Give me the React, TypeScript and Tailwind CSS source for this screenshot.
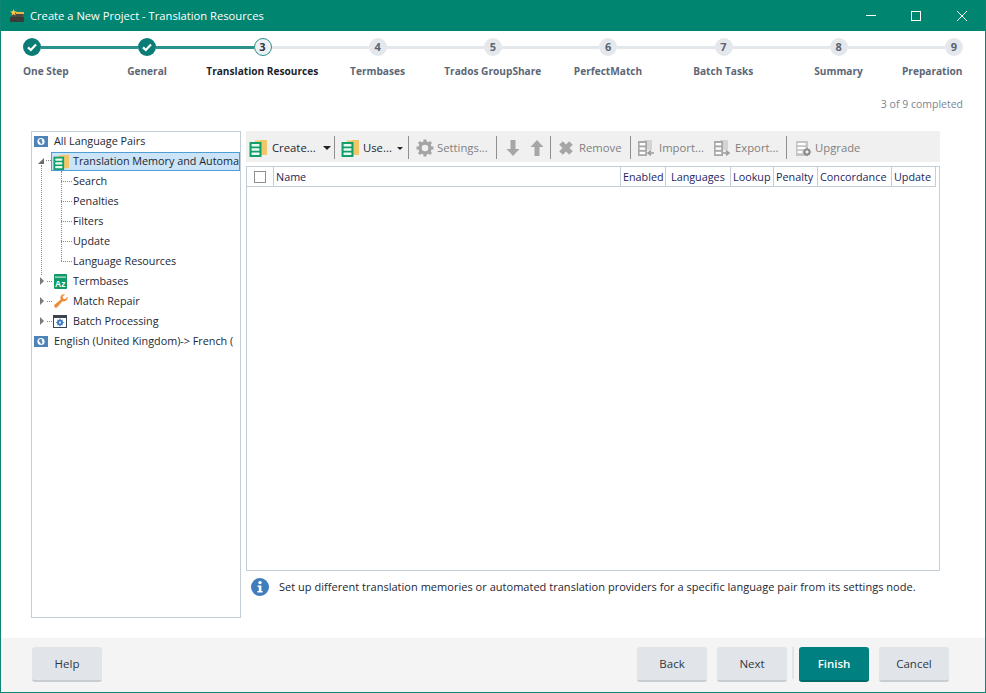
import React from "react";

const font = { fontFamily: '"Open Sans", "Noto Sans", sans-serif' };

function Check() {
  return (
    <span className="w-[18px] h-[18px] rounded-full bg-[#0a7d76] flex items-center justify-center shrink-0">
      <svg width="12" height="12" viewBox="0 0 12 12" fill="none"><path d="M2 6.4 L4.8 9 L10 3.4" stroke="#fff" strokeWidth="2.2" /></svg>
    </span>
  );
}
function Num({ n }: { n: number }) {
  return (
    <span className="w-[18px] h-[18px] rounded-full bg-[#e4e8ec] flex items-center justify-center shrink-0 text-[11px] font-bold text-[#5a6472]">{n}</span>
  );
}
function Line({ on }: { on?: boolean }) {
  return <span className={on ? "flex-1 h-[3px] bg-[#2a918c]" : "flex-1 h-[3px] bg-[#e4e8ec]"} />;
}

const labels = ["One Step", "General", "Translation Resources", "Termbases", "Trados GroupShare", "PerfectMatch", "Batch Tasks", "Summary", "Preparation"];

function Stepper() {
  return (
    <div className="pl-[22px] pr-[22px] pt-[7px]">
      <div className="flex items-center w-[940px]">
        <Check /><Line on /><Check /><Line on />
        <span className="w-[18px] h-[18px] rounded-full bg-[#eef1f3] border border-[#2a918c] flex items-center justify-center shrink-0 text-[11px] font-bold text-[#2b3440]">3</span>
        <Line /><Num n={4} /><Line /><Num n={5} /><Line /><Num n={6} /><Line /><Num n={7} /><Line /><Num n={8} /><Line /><Num n={9} />
      </div>
      <div className="grid grid-cols-[66.4px_repeat(7,115.25px)_66.4px] w-[940px] mt-[7px]">
        {labels.map((l, i) => (
          <span
            key={l}
            className={
              (i === 0 ? "text-left " : i === 8 ? "text-right " : "text-center ") +
              (i === 2 ? "text-[#1b1f2a] " : "text-[#5d6675] ") +
              "text-[10.15px] leading-[16px] font-bold whitespace-nowrap"
            }
          >
            {l}
          </span>
        ))}
      </div>
    </div>
  );
}

function TmIcon({ size = 18 }: { size?: number }) {
  return (
    <svg width={size} height={size} viewBox="0 0 18 18" className="shrink-0">
      <rect x="11" y="1" width="7" height="15" fill="#f2c76a" />
      <rect x="6" y="1.5" width="6" height="2" fill="#f2c76a" />
      <rect x="0.5" y="3" width="12" height="15" fill="#12a06a" />
      <rect x="2.5" y="5" width="8" height="2.6" rx="0.8" fill="#eafaf2" />
      <rect x="2.5" y="9.2" width="8" height="2.6" rx="0.8" fill="#eafaf2" />
      <rect x="2.5" y="13.4" width="8" height="2.6" rx="0.8" fill="#eafaf2" />
    </svg>
  );
}

function Globe() {
  return (
    <svg width="14" height="11" viewBox="0 0 14 11" className="shrink-0">
      <rect width="14" height="11" fill="#4d83b8" />
      <circle cx="7" cy="5.5" r="3.6" fill="#fff" />
      <path d="M6 3 L8.4 3.4 L7.6 5 L8.8 6.2 L7 8.4 L6.2 6.2 L4.6 5 Z" fill="#4d83b8" />
    </svg>
  );
}

function Termbase() {
  return (
    <svg width="13" height="15" viewBox="0 0 13 15" className="shrink-0">
      <rect x="0" y="0" width="13" height="15" fill="#109a68" rx="1" />
      <rect x="1" y="2.6" width="11" height="1" fill="#e8f6ef" />
      <text x="1" y="12.6" fontSize="8.5" fontWeight="700" fill="#fff" fontFamily="Liberation Sans">Az</text>
    </svg>
  );
}
function Wrench() {
  return (
    <svg width="14" height="14" viewBox="0 0 14 14" className="shrink-0">
      <path d="M13.6 2.8 L11 5.2 L9 4.6 L8.6 2.6 L11 0.4 C8.6 -0.2 6.2 1.4 6.4 4 C6.4 4.6 6.6 5 6.8 5.4 L0.8 10.6 C-0.2 11.6 0.2 13 1 13.4 C1.8 14 2.8 13.8 3.4 13 L8.4 7.2 C11.4 8.2 14.2 5.8 13.6 2.8 Z" fill="#ed8a34" />
    </svg>
  );
}
function Batch() {
  return (
    <svg width="14" height="13" viewBox="0 0 14 13" className="shrink-0">
      <rect x="0" y="0" width="14" height="13" fill="#3c4450" />
      <rect x="1" y="3" width="12" height="9" fill="#fff" />
      <circle cx="7" cy="7.5" r="3" fill="#3f7cc0" />
      <path d="M7 3.6 V11.4 M3.2 7.5 H10.8 M4.4 5 L9.6 10 M9.6 5 L4.4 10" stroke="#3f7cc0" strokeWidth="1" />
      <circle cx="7" cy="7.5" r="1" fill="#fff" />
    </svg>
  );
}
function Gear({ size = 18, color = "#a4a4a4" }: { size?: number; color?: string }) {
  return (
    <svg width={size} height={size} viewBox="0 0 18 18" className="shrink-0">
      <circle cx="9" cy="9" r="5" fill="none" stroke={color} strokeWidth="3.4" />
      <path d="M9 0.5 V4 M9 14 V17.5 M0.5 9 H4 M14 9 H17.5 M3 3 L5.4 5.4 M12.6 12.6 L15 15 M15 3 L12.6 5.4 M5.4 12.6 L3 15" stroke={color} strokeWidth="3" />
    </svg>
  );
}
function Arrow({ up }: { up?: boolean }) {
  return (
    <svg width="14" height="18" viewBox="0 0 14 18" className="shrink-0">
      <path d={up ? "M7 1 L13.5 8 L9.5 8 L9.5 17 L4.5 17 L4.5 8 L0.5 8 Z" : "M7 17 L13.5 10 L9.5 10 L9.5 1 L4.5 1 L4.5 10 L0.5 10 Z"} fill="#a6a6a6" />
    </svg>
  );
}
function RemoveX() {
  return (
    <svg width="16" height="16" viewBox="0 0 16 16" className="shrink-0">
      <path d="M3 3 L13 13 M13 3 L3 13" stroke="#a6a6a6" strokeWidth="5" />
    </svg>
  );
}
function ImportIcon({ out }: { out?: boolean }) {
  return (
    <svg width="18" height="18" viewBox="0 0 18 18" className="shrink-0">
      <rect x="7" y="1" width="8" height="10" fill="#d4d4d4" />
      <rect x="1" y="2" width="9" height="15" fill="#a8a8a8" />
      <rect x="2.6" y="4" width="5.6" height="2.4" fill="#fff" />
      <rect x="2.6" y="8.4" width="5.6" height="2.4" fill="#fff" />
      <rect x="2.6" y="12.8" width="5.6" height="2.4" fill="#fff" />
      <path d={out ? "M10 14 H15 M13 11.6 L16 14 L13 16.4" : "M17 14 H12 M14 11.6 L11 14 L14 16.4"} stroke="#9a9a9a" strokeWidth="1.5" fill="none" />
    </svg>
  );
}
function Upgrade() {
  return (
    <svg width="17" height="17" viewBox="0 0 17 17" className="shrink-0">
      <rect x="1" y="1" width="12" height="15" fill="#c4c4c4" />
      <rect x="2.6" y="3" width="8" height="2.2" fill="#fff" />
      <rect x="2.6" y="7" width="8" height="2.2" fill="#fff" />
      <rect x="2.6" y="11" width="5" height="2.2" fill="#fff" />
      <circle cx="12" cy="12" r="2.6" fill="none" stroke="#8c8c8c" strokeWidth="1.8" />
      <path d="M12 7.8 V16.2 M7.8 12 H16.2 M9 9 L15 15 M15 9 L9 15" stroke="#8c8c8c" strokeWidth="1" />
      <circle cx="12" cy="12" r="1.4" fill="#f0f0f0" />
    </svg>
  );
}
function Sep({ className }: { className: string }) {
  return <span className={"w-px h-[23px] bg-[#8f8f8f] shrink-0 -mt-[2px] " + className} />;
}

function Toolbar() {
  const dim = "text-[#808080] whitespace-nowrap";
  return (
    <div className="h-[31px] bg-[#f0f0f0] flex items-center pl-[3px] pt-[3px] text-[11.3px]">
      <TmIcon />
      <span className="ml-[5px] w-[44px] text-[#1c2733] whitespace-nowrap">Create...</span>
      <span className="ml-[7px] w-0 h-0 border-x-[4px] border-x-transparent border-t-[4px] border-t-[#222] shrink-0" />
      <Sep className="ml-[3px]" />
      <span className="ml-[6px]" />
      <TmIcon />
      <span className="ml-[4px] w-[29px] text-[#1c2733] whitespace-nowrap">Use...</span>
      <span className="ml-[5px] w-0 h-0 border-x-[3px] border-x-transparent border-t-[3px] border-t-[#222] shrink-0" />
      <Sep className="ml-[5px]" />
      <span className="ml-[7px]" />
      <Gear />
      <span className={"ml-[3px] w-[52px] " + dim}>Settings...</span>
      <Sep className="ml-[7px]" />
      <span className="ml-[9px]" />
      <Arrow />
      <span className="ml-[10px]" />
      <Arrow up />
      <Sep className="ml-[6px]" />
      <span className="ml-[7px]" />
      <RemoveX />
      <span className={"ml-[5px] w-[44px] " + dim}>Remove</span>
      <Sep className="ml-[7px]" />
      <span className="ml-[6px]" />
      <ImportIcon />
      <span className={"ml-[4px] w-[46px] " + dim}>Import...</span>
      <span className="ml-[8px]" />
      <ImportIcon out />
      <span className={"ml-[4px] w-[44px] " + dim}>Export...</span>
      <Sep className="ml-[7px]" />
      <span className="ml-[8px]" />
      <Upgrade />
      <span className={"ml-[3px] " + dim}>Upgrade</span>
    </div>
  );
}

const cols: [string, string][] = [
  ["Enabled", "w-[45px] pl-[2px]"],
  ["Languages", "w-[65px] pl-[5px]"],
  ["Lookup", "w-[43px] pl-[2px]"],
  ["Penalty", "w-[44px] pl-[2px]"],
  ["Concordance", "w-[74px] pl-[2px]"],
  ["Update", "w-[44px] pl-[2px]"],
];

function Table() {
  return (
    <div className="mt-[4px] h-[405px] border border-[#c3ced6] bg-white">
      <div className="h-[20px] w-[689px] flex border-b border-[#c3ced6] text-[10.8px] leading-[19px] text-[#1d2560]">
        <div className="w-[27px] border-r border-[#c3ced6] flex items-center justify-center pr-[1px]">
          <span className="w-[12px] h-[12px] border border-[#8e8e8e] bg-white" />
        </div>
        <div className="flex-1 border-r border-[#c3ced6] pl-[2px]">Name</div>
        {cols.map(([c, w]) => (
          <div key={c} className={w + " border-r border-[#c3ced6] whitespace-nowrap overflow-hidden"}>{c}</div>
        ))}
      </div>
    </div>
  );
}

function TreeRow({ children, label, indent }: { children?: React.ReactNode; label: string; indent: string }) {
  return (
    <div className={"flex items-center whitespace-nowrap " + indent}>
      {children}
      <span className="text-[#1c2733]">{label}</span>
    </div>
  );
}
function Dash({ className }: { className: string }) {
  return <span className={"h-0 border-t border-dotted border-[#8a8a8a] shrink-0 " + className} />;
}
function Tri() {
  return <span className="w-0 h-0 border-y-[4px] border-y-transparent border-l-[4px] border-l-[#7b7b7b] shrink-0" />;
}

function Tree() {
  return (
    <div className="relative w-[210px] h-[487px] border border-[#c3ced6] text-[10.8px] overflow-hidden">
      <span className="absolute left-[9px] top-[33px] h-[110px] border-l border-dotted border-[#8a8a8a]" />
      <span className="absolute left-[29px] top-[39px] h-[90px] border-l border-dotted border-[#8a8a8a]" />
      <TreeRow label="All Language Pairs" indent="h-[19px] pl-[2px]">
        <Globe /><span className="w-[6px] shrink-0" />
      </TreeRow>
      <div className="relative h-[20px] flex items-end whitespace-nowrap">
        <span className="absolute left-[6px] top-[7px] w-0 h-0 border-b-[6px] border-b-[#6b6b6b] border-l-[6px] border-l-transparent" />
        <Dash className="ml-[14px] w-[5px] mb-[10px]" />
        <div className="flex-1 h-[19px] min-w-0 bg-[#cce4f7] border border-[#4f9fd6] flex items-center">
          <span className="w-px shrink-0" />
          <TmIcon size={16} />
          <span className="ml-[4px] text-[#1c2733]">Translation Memory and Automa</span>
        </div>
      </div>
      {["Search", "Penalties", "Filters", "Update", "Language Resources"].map((t) => (
        <TreeRow key={t} label={t} indent="h-[20px] pl-[29px]"><Dash className="w-[11px] mr-px" /></TreeRow>
      ))}
      <TreeRow label="Termbases" indent="h-[20px] pl-[8px]">
        <Tri /><Dash className="ml-[3px] w-[5px] mr-[2px]" /><Termbase /><span className="w-[6px] shrink-0" />
      </TreeRow>
      <TreeRow label="Match Repair" indent="h-[20px] pl-[8px]">
        <Tri /><Dash className="ml-[3px] w-[5px] mr-[2px]" /><Wrench /><span className="w-[5px] shrink-0" />
      </TreeRow>
      <TreeRow label="Batch Processing" indent="h-[20px] pl-[8px]">
        <Tri /><Dash className="ml-[3px] w-[5px] mr-[1px]" /><Batch /><span className="w-[6px] shrink-0" />
      </TreeRow>
      <TreeRow label="English (United Kingdom)-> French (" indent="h-[20px] pl-[2px]">
        <Globe /><span className="w-[6px] shrink-0" />
      </TreeRow>
    </div>
  );
}

function InfoIcon() {
  return (
    <svg width="18" height="18" viewBox="0 0 18 18" className="shrink-0">
      <circle cx="9" cy="9" r="9" fill="#3f7dbd" />
      <circle cx="9" cy="4.6" r="1.7" fill="#fff" />
      <path d="M6.6 7.4 H10.4 V13 H11.6 V14.6 H6.4 V13 H7.8 V9 H6.6 Z" fill="#fff" />
    </svg>
  );
}

function Btn({ children, primary, className = "" }: { children: string; primary?: boolean; className?: string }) {
  return (
    <button
      className={
        (primary
          ? "bg-[#008080] border-b-2 border-b-[#006a68] text-white font-semibold "
          : "bg-[#e1e5e9] border-b-2 border-b-[#c9cdd2] text-[#2e3744] ") +
        "w-[70px] h-[35px] rounded-[3px] text-[11.5px] flex items-center justify-center " +
        className
      }
    >
      {children}
    </button>
  );
}

export default function App() {
  return (
    <div style={font} className="w-[986px] h-[693px] border border-[#0e8673] border-t-0 flex flex-col bg-white overflow-hidden">
      <div className="h-[31px] bg-[#008571] flex items-center text-white shrink-0 -mx-px">
        <svg width="14" height="14" viewBox="0 0 14 14" className="ml-[10px] shrink-0">
          <rect x="0" y="8" width="14" height="5" fill="#3b3b38" rx="1" />
          <rect x="1" y="4" width="12" height="4" fill="#4a4a44" />
          <rect x="6" y="3" width="8" height="2" fill="#e8b848" />
          <path d="M3.5 0 L4.5 2.2 L7 2.5 L5 4 L5.6 6.4 L3.5 5.2 L1.4 6.4 L2 4 L0 2.5 L2.5 2.2 Z" fill="#f5c84a" />
        </svg>
        <span className="ml-[6px] pt-px text-[11.2px]">Create a New Project - Translation Resources</span>
        <div className="ml-auto flex items-center mr-[19px]">
          <span className="w-[10px] h-px bg-white mr-[35px]" />
          <span className="w-[10px] h-[10px] border border-white mr-[36px]" />
          <svg width="10" height="10" viewBox="0 0 10 10"><path d="M0 0 L10 10 M10 0 L0 10" stroke="#fff" strokeWidth="1" /></svg>
        </div>
      </div>
      <Stepper />
      <div className="mt-[17px] h-[16px] pr-[22px] text-right text-[10.5px] leading-[16px] text-[#7d8590]">3 of 9 completed</div>
      <div className="flex mt-[19px] ml-[30px] shrink-0">
        <Tree />
        <div className="ml-[5px] w-[694px] text-[12px]">
          <Toolbar />
          <Table />
          <div className="flex items-center mt-[7px] pl-[5px]">
            <InfoIcon />
            <span className="ml-[10px] text-[11px] tracking-[0.025px] text-[#1c2733] whitespace-nowrap">Set up different translation memories or automated translation providers for a specific language pair from its settings node.</span>
          </div>
        </div>
      </div>
      <div className="mt-[20px] flex-1 bg-[#f4f4f4] flex items-start pt-[9px] pl-[31px]">
        <Btn>Help</Btn>
        <Btn className="ml-[535px]">Back</Btn>
        <Btn className="ml-[10px]">Next</Btn>
        <span className="w-[2px] h-[32px] bg-[#e1e5e9] ml-[5px]" />
        <Btn primary className="ml-[5px]">Finish</Btn>
        <Btn className="ml-[10px]">Cancel</Btn>
      </div>
    </div>
  );
}
